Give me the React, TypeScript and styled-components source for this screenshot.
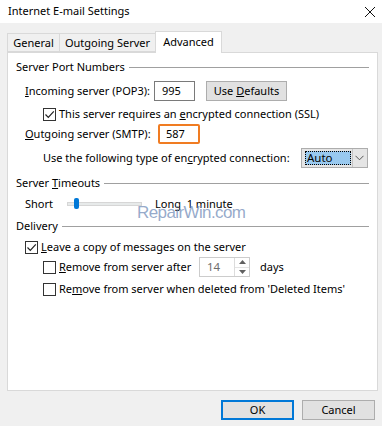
import React from "react";
import styled, { createGlobalStyle } from "styled-components";

const Global = createGlobalStyle`
  html, body { margin: 0; padding: 0; background: #f0f0f0; }
  body { font-family: "Segoe UI", "Noto Sans", "Liberation Sans", sans-serif; font-size: 11px; color: #000; }
  * { box-sizing: border-box; }
`;

const Dialog = styled.div`
  width: 382px;
  height: 426px;
  background: #f0f0f0;
  display: flex;
  flex-direction: column;
  position: relative;
  overflow: hidden;
`;

const TitleBar = styled.div`
  height: 23px;
  background: #ffffff;
  display: flex;
  align-items: center;
  justify-content: space-between;
  padding: 0 6px 0 8px;
`;

const Title = styled.span`
  font-size: 11px;
  line-height: 16px;
  margin-top: -1px;
`;

const Body = styled.div`
  padding: 8px 4px 0 7px;
  display: flex;
  flex-direction: column;
`;

const TabStrip = styled.div`
  display: flex;
  align-items: flex-end;
  height: 21px;
  position: relative;
  z-index: 1;
`;

const Tab = styled.div<{ $active?: boolean; $width: number }>`
  width: ${(p) => p.$width}px;
  height: ${(p) => (p.$active ? 22 : 19)}px;
  margin-bottom: ${(p) => (p.$active ? -1 : 0)}px;
  border: 1px solid #d9d9d9;
  border-bottom: ${(p) => (p.$active ? "none" : "1px solid #d9d9d9")};
  margin-left: -1px;
  background: ${(p) => (p.$active ? "#ffffff" : "#f0f0f0")};
  display: flex;
  justify-content: center;
  align-items: ${(p) => (p.$active ? "flex-start" : "center")};
  padding-top: ${(p) => (p.$active ? 2 : 0)}px;
  line-height: 16px;
  &:first-child { margin-left: 0; }
`;

const Panel = styled.div`
  height: 339px;
  width: 371px;
  background: #ffffff;
  border: 1px solid #d9d9d9;
  padding: 4px 8px 0 8px;
  display: flex;
  flex-direction: column;
  position: relative;
`;

const Row = styled.div<{ $top?: number; $indent?: number }>`
  height: 20px;
  margin-top: ${(p) => p.$top ?? 0}px;
  padding-left: ${(p) => p.$indent ?? 0}px;
  display: flex;
  align-items: center;
  white-space: nowrap;
  line-height: 16px;
`;

const GroupLabel = styled.span`
  margin-right: 4px;
`;

const GroupLine = styled.div`
  flex: 1;
  height: 1px;
  background: #a0a0a0;
  margin-top: 1px;
`;

const Label = styled.span<{ $width?: number; $ml?: number }>`
  display: inline-block;
  width: ${(p) => (p.$width ? `${p.$width}px` : "auto")};
  margin-left: ${(p) => p.$ml ?? 0}px;
`;

const TextBox = styled.div<{ $focus?: boolean; $width: number }>`
  width: ${(p) => p.$width}px;
  height: 20px;
  border: ${(p) => (p.$focus ? "2px solid #f07c22" : "1px solid #7a7a7a")};
  background: #ffffff;
  display: flex;
  align-items: center;
  padding-left: ${(p) => (p.$focus ? 6 : 7)}px;
  border-radius: ${(p) => (p.$focus ? 2 : 0)}px;
`;

const Button = styled.div<{ $default?: boolean; $width: number; $ml?: number }>`
  width: ${(p) => p.$width}px;
  height: 20px;
  margin-left: ${(p) => p.$ml ?? 0}px;
  background: #e1e1e1;
  border: ${(p) => (p.$default ? "2px solid #0078d7" : "1px solid #adadad")};
  display: flex;
  align-items: center;
  justify-content: center;
  line-height: 16px;
`;

const CheckBox = styled.div`
  width: 13px;
  height: 13px;
  border: 1px solid #333333;
  background: #ffffff;
  margin-right: 3px;
  display: flex;
  align-items: center;
  justify-content: center;
  flex-shrink: 0;
`;

const Select = styled.div`
  width: 67px;
  height: 20px;
  border: 1px solid #adadad;
  background: #e5e5e5;
  display: flex;
  align-items: stretch;
  padding: 2px 1px 2px 3px;
`;

const SelectValue = styled.div`
  width: 46px;
  background: #99c9ef;
  border: 1px dotted #000;
  display: flex;
  align-items: center;
  padding-left: 1px;
  line-height: 14px;
  font-size: 11.5px;
`;

const SelectArrow = styled.div`
  flex: 1;
  margin: -2px 0 -2px 1px;
  border-left: 1px solid #c4c4c4;
  display: flex;
  align-items: center;
  justify-content: center;
`;

const SliderTrack = styled.div`
  width: 75px;
  height: 4px;
  background: #e7eaea;
  border: 1px solid #d6d6d6;
  position: relative;
`;

const SliderThumb = styled.div`
  position: absolute;
  left: 6px;
  top: -5px;
  width: 5px;
  height: 11px;
  border-radius: 2px;
  background: #0078d7;
`;

const Spinner = styled.div`
  width: 51px;
  height: 20px;
  border: 1px solid #cccccc;
  background: #fff;
  display: flex;
  color: #6d6d6d;
`;

const SpinnerValue = styled.div`
  flex: 1;
  display: flex;
  align-items: center;
  padding-left: 7px;
  font-size: 11.5px;
`;

const SpinnerButtons = styled.div`
  width: 15px;
  display: flex;
  flex-direction: column;
  border-left: 1px solid #dcdcdc;
`;

const SpinnerHalf = styled.div`
  flex: 1;
  display: flex;
  align-items: center;
  justify-content: center;
  & + & { border-top: 1px solid #e4e4e4; }
`;

const Watermark = styled.div`
  position: absolute;
  left: 129px;
  top: 150px;
  font-family: "Liberation Sans", Arial, sans-serif;
  font-size: 17px;
  letter-spacing: -0.6px;
  color: rgba(115, 142, 185, 0.75);
  pointer-events: none;
`;

const Footer = styled.div`
  display: flex;
  justify-content: flex-end;
  padding: 9px 3px 0 0;
`;

const Check = () => (
  <svg width="11" height="11" viewBox="0 0 11 11">
    <path d="M1.5 5.5 L4.3 8.3 L9.8 2.3" fill="none" stroke="#222" strokeWidth="1.2" />
  </svg>
);

const Arrow = ({ up }: { up?: boolean }) => (
  <svg width="7" height="4" viewBox="0 0 7 4">
    <path d={up ? "M0 4 L3.5 0 L7 4 Z" : "M0 0 L3.5 4 L7 0 Z"} fill="#606060" />
  </svg>
);

export default function App() {
  return (
    <>
      <Global />
      <Dialog>
        <TitleBar>
          <Title>Internet E-mail Settings</Title>
          <svg width="12" height="12" viewBox="0 0 12 12">
            <path d="M1 1 L11 11 M11 1 L1 11" stroke="#111" strokeWidth="1" />
          </svg>
        </TitleBar>
        <Body>
          <TabStrip>
            <Tab $width={53}>General</Tab>
            <Tab $width={97}>Outgoing Server</Tab>
            <Tab $width={67} $active>
              Advanced
            </Tab>
          </TabStrip>
          <Panel>
            <Row>
              <GroupLabel>Server Port Numbers</GroupLabel>
              <GroupLine />
            </Row>
            <Row $top={4} $indent={9}>
              <Label $width={129}>
                <u>I</u>ncoming server (POP3):
              </Label>
              <TextBox $width={41}>995</TextBox>
              <Button $width={81} $ml={11}>
                Use&nbsp;<u>D</u>efaults
              </Button>
            </Row>
            <Row $top={3} $indent={27}>
              <CheckBox>
                <Check />
              </CheckBox>
              <span>
                This server requires an <u>e</u>ncrypted connection (SSL)
              </span>
            </Row>
            <Row $indent={9}>
              <Label $width={133}>
                <u>O</u>utgoing server (SMTP):
              </Label>
              <TextBox $width={42} $focus>
                587
              </TextBox>
            </Row>
            <Row $top={4} $indent={27}>
              <Label $width={258}>
                Use the following type of en<u>c</u>rypted connection:
              </Label>
              <Select>
                <SelectValue>Auto</SelectValue>
                <SelectArrow>
                  <svg width="9" height="6" viewBox="0 0 9 6">
                    <path d="M0.5 0.8 L4.5 4.8 L8.5 0.8" fill="none" stroke="#555" strokeWidth="1" />
                  </svg>
                </SelectArrow>
              </Select>
            </Row>
            <Row $top={5}>
              <GroupLabel>
                Server <u>T</u>imeouts
              </GroupLabel>
              <GroupLine />
            </Row>
            <Row $top={1} $indent={9}>
              <Label $width={42}>Short</Label>
              <SliderTrack>
                <SliderThumb />
              </SliderTrack>
              <Label $ml={13}>Long&nbsp;&nbsp;1 minute</Label>
            </Row>
            <Row $top={2}>
              <GroupLabel>Delivery</GroupLabel>
              <GroupLine />
            </Row>
            <Row $top={1} $indent={9}>
              <CheckBox>
                <Check />
              </CheckBox>
              <span>
                <u>L</u>eave a copy of messages on the server
              </span>
            </Row>
            <Row $indent={27}>
              <CheckBox />
              <Label $width={140}>
                <u>R</u>emove from server after
              </Label>
              <Spinner>
                <SpinnerValue>14</SpinnerValue>
                <SpinnerButtons>
                  <SpinnerHalf>
                    <Arrow up />
                  </SpinnerHalf>
                  <SpinnerHalf>
                    <Arrow />
                  </SpinnerHalf>
                </SpinnerButtons>
              </Spinner>
              <Label $ml={10}>days</Label>
            </Row>
            <Row $top={2} $indent={27}>
              <CheckBox />
              <span>
                Re<u>m</u>ove from server when deleted from 'Deleted Items'
              </span>
            </Row>
            <Watermark>RepairWin.com</Watermark>
          </Panel>
          <Footer>
            <Button $width={73} $default>
              OK
            </Button>
            <Button $width={73} $ml={8}>
              Cancel
            </Button>
          </Footer>
        </Body>
      </Dialog>
    </>
  );
}
